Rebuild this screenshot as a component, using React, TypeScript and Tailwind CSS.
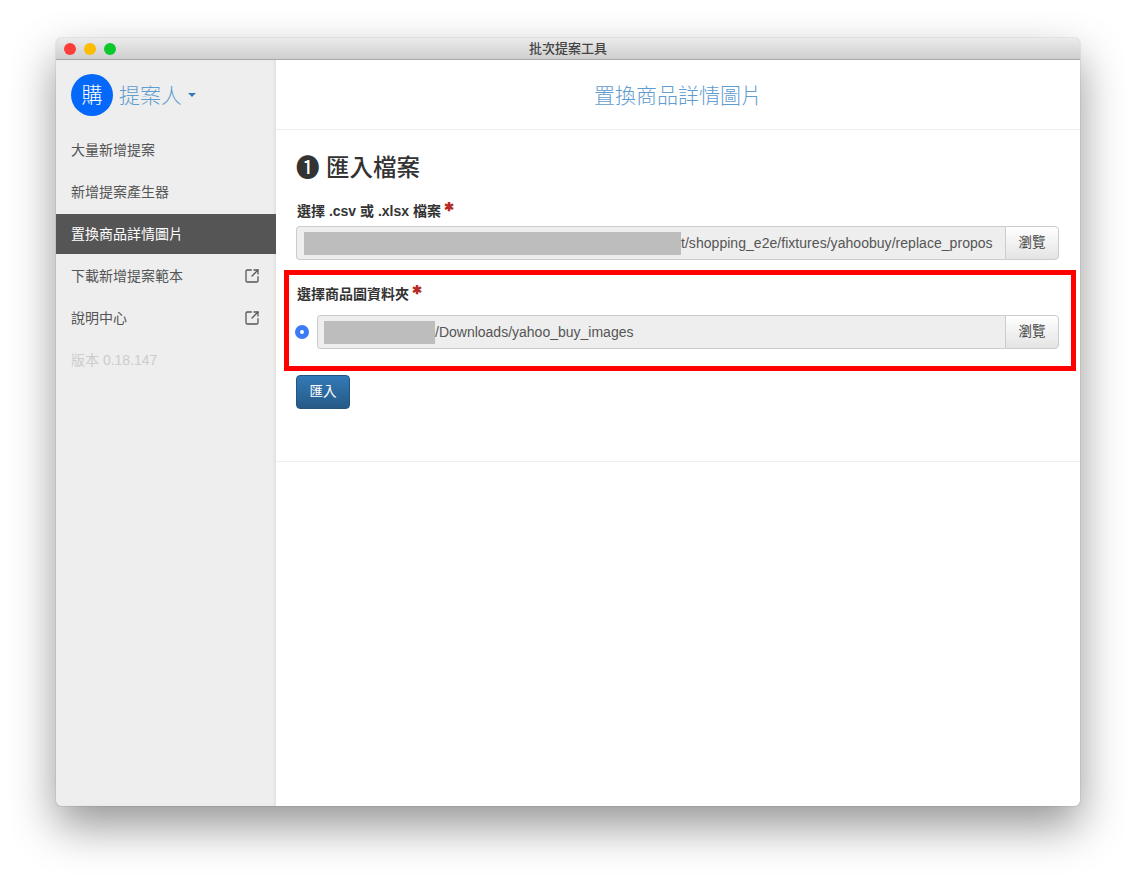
import { SquareArrowOutUpRight } from "lucide-react";

const FONT = "[font-family:'Liberation_Sans','Noto_Sans_CJK_TC',sans-serif]";

function NavItem({ label, active, external }: { label: string; active?: boolean; external?: boolean }) {
  return (
    <div className={`relative flex h-[40px] items-center justify-between pl-[15px] pr-[16px] text-[14px] ${active ? "bg-[#555555] text-white" : "text-[#555555]"}`}>
      <span>{label}</span>
      {external && <SquareArrowOutUpRight size={16} strokeWidth={1.9} className="text-[#555555]" />}
    </div>
  );
}

function Required() {
  return <span className="relative top-[-4px] ml-[3px] text-[12px] leading-none font-bold text-[#b52b27]">✱</span>;
}

function BrowseButton() {
  return (
    <button className="h-full w-[54px] shrink-0 rounded-r-[4px] border border-[#cccccc] bg-gradient-to-b from-[#ffffff] to-[#e4e4e4] text-[13.5px] text-[#444444]">
      瀏覽
    </button>
  );
}

export default function App() {
  return (
    <div className={`${FONT} h-[880px] w-[1136px] overflow-hidden bg-white pl-[56px] pt-[38px]`}>
      <div className="flex h-[768px] w-[1024px] flex-col overflow-hidden rounded-[6px] bg-white shadow-[0_20px_45px_rgba(0,0,0,0.42),0_0_1px_rgba(0,0,0,0.6)]">
        {/* Title bar */}
        <div className="relative flex h-[22px] shrink-0 items-center justify-center border-b border-[#a8a8a8] bg-gradient-to-b from-[#ebebeb] to-[#cfcfcf] text-[13px] font-medium text-[#444444]">
          <div className="absolute left-[8px] top-[5px] flex gap-[8px]">
            <span className="h-[12px] w-[12px] rounded-full bg-[#fc3d39]" />
            <span className="h-[12px] w-[12px] rounded-full bg-[#fdbc00]" />
            <span className="h-[12px] w-[12px] rounded-full bg-[#0bc92b]" />
          </div>
          批次提案工具
        </div>

        <div className="flex min-h-0 flex-1">
          {/* Sidebar */}
          <aside className="flex w-[220px] shrink-0 flex-col bg-[#eeeeee] shadow-[inset_-2px_0_2px_#e2e2e2]">
            <div className="flex h-[70px] items-center pb-[1px] pl-[15px]">
              <div className="flex h-[42px] w-[42px] items-center justify-center rounded-full bg-[#0469fb] text-[21px] font-extralight text-white">
                購
              </div>
              <span className="ml-[6px] mt-[2px] text-[21px] font-light text-[#5f9ccf]">提案人</span>
              <span className="ml-[6px] mt-[1px] h-0 w-0 border-x-[4px] border-t-[4px] border-x-transparent border-t-[#337ab7]" />
            </div>
            <div className="flex flex-col gap-[2px]">
              <NavItem label="大量新增提案" />
              <NavItem label="新增提案產生器" />
              <NavItem label="置換商品詳情圖片" active />
              <NavItem label="下載新增提案範本" external />
              <NavItem label="說明中心" external />
              <div className="flex h-[40px] items-center pl-[15px] text-[14px] text-[#cccccc]">版本 0.18.147</div>
            </div>
          </aside>

          {/* Main */}
          <main className="min-w-0 flex-1 bg-white">
            <div className="flex h-[70px] items-center justify-center border-b border-[#eeeeee] pt-[2px] text-[21px] font-light text-[#5f9ccf]">
              置換商品詳情圖片
            </div>
            <div className="h-[332px] border-b border-[#eeeeee] px-[20px] pt-[22px]">
              <h2 className="h-[32px] text-[23.5px] leading-[32px] font-medium text-[#333333]">❶ 匯入檔案</h2>
              <label className="mt-[17px] ml-[1px] flex h-[20px] items-center text-[14px] font-semibold text-[#333333]">
                選擇 .csv 或 .xlsx 檔案
                <Required />
              </label>
              <div className="mt-[5px] flex h-[34px] w-[763px]">
                <div className="flex min-w-0 flex-1 items-center overflow-hidden rounded-l-[4px] border border-r-0 border-[#cccccc] bg-[#eeeeee] pl-[7px] pr-[12px] text-[14px] text-[#555555]">
                  <span className="h-[23px] w-[377px] shrink-0 bg-[#bdbdbd]" />
                  <span className="whitespace-nowrap tracking-[0.04px]">t/shopping_e2e/fixtures/yahoobuy/replace_propos</span>
                </div>
                <BrowseButton />
              </div>

              <div className="-ml-[12px] mt-[10px] h-[101px] w-[792px] border-[5px] border-[#ff0000] pl-[7px] pt-[9px]">
                <label className="ml-[1px] flex h-[20px] items-center text-[14px] font-semibold text-[#333333]">
                  選擇商品圖資料夾
                  <Required />
                </label>
                <div className="mt-[11px] flex h-[34px] items-center">
                  <span className="-ml-[1px] flex h-[14px] w-[14px] shrink-0 items-center justify-center rounded-full bg-[#3b7bf6]">
                    <span className="h-[4px] w-[4px] rounded-full bg-white" />
                  </span>
                  <div className="ml-[8px] flex h-full w-[742px]">
                    <div className="flex min-w-0 flex-1 items-center overflow-hidden rounded-l-[4px] border border-r-0 border-[#cccccc] bg-[#eeeeee] pl-[6px] text-[14px] text-[#555555]">
                      <span className="h-[23px] w-[111px] shrink-0 bg-[#bdbdbd]" />
                      <span className="whitespace-nowrap">/Downloads/yahoo_buy_images</span>
                    </div>
                    <BrowseButton />
                  </div>
                </div>
              </div>

              <button className="mt-[4px] h-[34px] w-[54px] rounded-[4px] border border-[#245580] bg-gradient-to-b from-[#337ab7] to-[#265a88] text-[13.5px] text-white">
                匯入
              </button>
            </div>
          </main>
        </div>
      </div>
    </div>
  );
}
